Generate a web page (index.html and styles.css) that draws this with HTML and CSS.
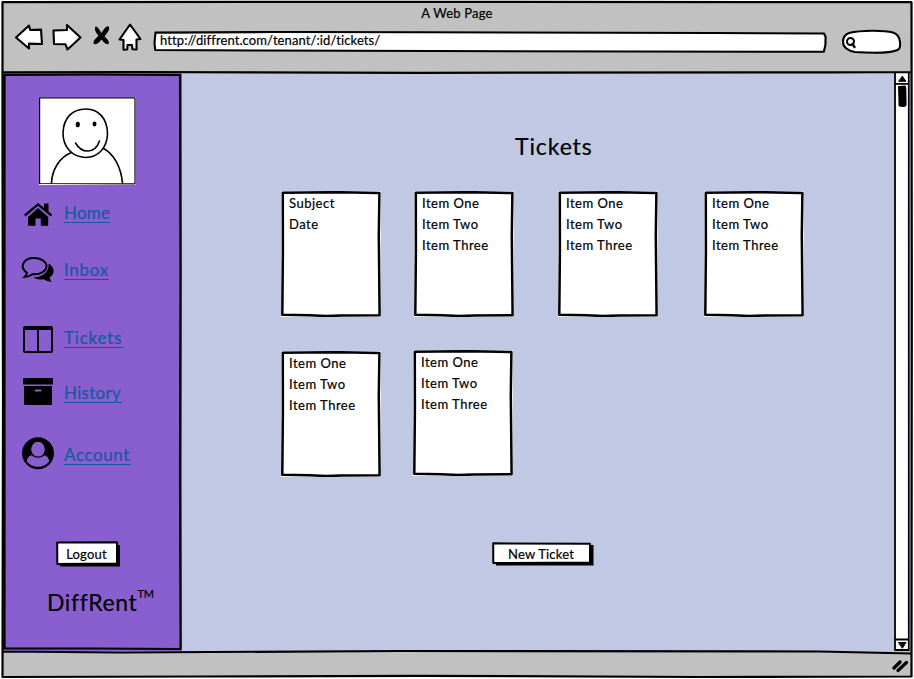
FILE: index.html
```html
<!DOCTYPE html>
<html lang="en">
<head>
<meta charset="utf-8">
<title>A Web Page</title>
<link rel="stylesheet" href="styles.css">
</head>
<body>
<svg class="defs" aria-hidden="true">
  <symbol id="card-frame" viewBox="0 0 100 126">
    <path fill="#fff" d="M0 0H100V126H0Z"/>
    <path class="ink" fill="none" stroke-width="2.5" d="M1.8 1.8L25 1.4L58 1.2L98.4 2L97.8 45L98.6 124.2L60 124.6L45 125L28 124.2L1.3 123.8L1.9 60Z"/>
  </symbol>
</svg>
<div class="window">
  <header class="toolbar">
    <div class="title">A Web Page</div>
    <div class="controls">
      <svg class="nav-arrows" viewBox="0 0 130 30">
        <g fill="#fff" stroke="#000" stroke-width="2.1" stroke-linejoin="round" stroke-linecap="round">
          <path d="M1 15.5L14 3.5L15.2 8L26 7.6L27 22L14 21.6L14 26.5L7.500 21Z"/>
          <path d="M38.500 8.500L52 8L52 3L65.500 15.500L52.500 27.500L50.500 22.300L39 22Z"/>
          <path d="M115 2.500L125.500 17L121.500 17.500L121.500 27.500L117.500 27.300L117 23L112.500 23L112.200 27.500L108.500 27.700L108.500 18L104.500 17.500Z"/>
        </g>
        <path d="M80 5.500C81 3 83 5 86.500 11C89.500 6 92.500 3 94 5C95 8 92 11 89.500 14.500C93.500 18 94.500 20 93.500 22C91 23 88.500 20 86.500 17.500C83.500 21.500 80 23.500 78.500 21.500C78 18.500 81.500 16 83.500 13.500C80.500 10 79.500 8 80 5.500Z"/>
      </svg>
      <div class="address">
        <svg class="frame" viewBox="0 0 674 22"><path class="ink white" stroke-width="2.1" d="M2.500 1.600L120 1L270 1.300L560 2L671 2.500L672.600 6L672.400 14L670.800 20.800L480 20.500L280 20L110 19.500L2.200 19L1.500 12Z"/></svg>
        <span>http://diffrent.com/tenant/:id/tickets/</span>
      </div>
      <svg class="search" viewBox="0 0 62 27">
        <path class="ink white" stroke-width="2.100" d="M8 4C20 1 43 1 52 3.500C57 5 58.500 8 59 13C59.500 17 59 20 56.500 21C48 24.500 28 24 14 23C7 22 2 18 2 13C2 8 4 5.500 8 4Z"/>
        <circle class="ink" fill="none" stroke-width="2" cx="9.500" cy="12.500" r="3.500"/><path class="ink" stroke-width="2.400" d="M11.500 15L13.500 18"/>
      </svg>
    </div>
  </header>

  <div class="body">
    <aside class="sidebar">
      <svg class="avatar" viewBox="0 0 97 88">
        <path class="white" d="M0 0H97V88H0Z"/>
        <g class="ink" fill="none">
          <path stroke-width="1.200" d="M.6 .8L96 .8V86.800L.6 86.500Z"/>
          <g stroke-width="1.600"><path d="M47 12C60 12 68.500 22 68.500 37C68 51 59 60.500 46.500 60.500C33 60 24 50 24 36C24.500 21 33 12 47 12Z"/>
          <path d="M36.500 46C43 57 56 57 60.500 44"/><path d="M32.500 55.500C21 60 13 72 12.500 86M64.500 51.500C75 57 82 70 83.500 86"/></g>
        </g>
        <ellipse cx="38.800" cy="27.500" rx="2.100" ry="2.700"/><ellipse cx="55.500" cy="27" rx="2" ry="2.400"/>
      </svg>
      <nav class="menu">
        <div class="item"><svg viewBox="0 0 36 36"><path d="M18 13L28.200 22V30.700H20.800V23.500H15.500V30.700H8V22Z"/><path d="M24 8.500H28.500V17L24 13.500Z"/><path d="M4.800 20.500L18 9.400L31.500 20.500" fill="none" stroke="#000" stroke-width="2.300"/></svg><a class="w-home">Home</a></div>
        <div class="item"><svg viewBox="0 0 36 36"><path d="M28.500 11.500C33 14 35.500 19 32 23.500L29.500 25.500C30 27.500 31 29 32 30C28 29.500 26 28.700 24 27.300C20 28 16 27 13.500 25.200C22 25.500 29.500 20 28.500 11.500Z"/><path d="M14 6C21 6 26.500 9.500 26.500 14.200C26.500 19 20 23 12.500 22.200C10 24 7.500 25 4.500 25C6 23.500 7 22.500 7 20.500C-1 15.500 3 6 14 6Z" fill="none" stroke="#000" stroke-width="2"/></svg><a class="w-inbox">Inbox</a></div>
        <div class="item"><svg viewBox="0 0 36 36"><path fill-rule="evenodd" d="M5 6H31Q33 6 33 8V31Q33 33 31 33H5Q3 33 3 31V8Q3 6 5 6ZM5 10V31H17V10ZM19 10V31H31V10Z"/></svg><a class="w-tickets">Tickets</a></div>
        <div class="item"><svg viewBox="0 0 36 36"><path d="M4 3H32Q33 3 33 4V9.500H3V4Q3 3 4 3ZM4 11H32V29Q32 30 31 30H5Q4 30 4 29Z"/><path d="M15.500 15.500H20.500" stroke="#895fd0" stroke-width="1.800" stroke-linecap="round"/></svg><a class="w-history">History</a></div>
        <div class="item"><svg viewBox="0 0 36 36"><circle cx="18" cy="16.200" r="16"/><ellipse cx="18" cy="12.200" rx="6.800" ry="7.400" fill="#895fd0"/><path fill="#895fd0" d="M11.500 18.200C14 21.500 22 21.500 24.500 18.200C27.500 19 29 21.500 29.200 24.500C24 31.500 12 31.500 6.800 24.500C7 21 8.500 19 11.500 18.200Z"/></svg><a class="w-account">Account</a></div>
      </nav>
      <button class="button logout"><svg class="frame" viewBox="0 0 64 26"><path d="M4 4H64V25.500H4Z"/><path class="ink white" stroke-width="2" d="M1.200 1.500L61 1.300V22.500L1.300 23Z"/></svg><span>Logout</span></button>
      <div class="brand"><span>DiffRent</span><sup>TM</sup></div>
      <svg class="frame" viewBox="0 0 179 578"><path class="ink" fill="none" stroke-width="2.200" d="M1.500 2L90 1.500L177 2L177.500 200L177 400L177.600 576L90 575.500L1.500 575.500V300Z"/></svg>
    </aside>

    <main class="content">
      <h1>Tickets</h1>
      <section class="tickets">
        <article class="card"><svg class="frame"><use href="#card-frame"/></svg><p>Subject</p><p>Date</p></article>
        <article class="card"><svg class="frame"><use href="#card-frame"/></svg><p>Item One</p><p>Item Two</p><p>Item Three</p></article>
        <article class="card"><svg class="frame"><use href="#card-frame"/></svg><p>Item One</p><p>Item Two</p><p>Item Three</p></article>
        <article class="card"><svg class="frame"><use href="#card-frame"/></svg><p>Item One</p><p>Item Two</p><p>Item Three</p></article>
        <article class="card"><svg class="frame"><use href="#card-frame"/></svg><p>Item One</p><p>Item Two</p><p>Item Three</p></article>
        <article class="card raised"><svg class="frame"><use href="#card-frame"/></svg><p>Item One</p><p>Item Two</p><p>Item Three</p></article>
      </section>
      <button class="button new-ticket"><svg class="frame" viewBox="0 0 102 24"><path d="M4 3H101.500V23.500H4Z"/><path class="ink white" stroke-width="2" d="M1.200 1.300L98 1.800V20.500L1.300 21Z"/></svg><span>New Ticket</span></button>
    </main>

    <svg class="scrollbar" viewBox="0 0 16 578">
      <path class="white" d="M0 0H16V578H0Z"/>
      <path class="ink" fill="none" stroke-width="1.800" d="M1 0V577M14.800 0V577M1 10.800H14.500M1 566.500H14.500M1 577H15"/>
      <path class="ink" stroke-width="1" d="M8.500 3.500L12 8.300H5ZM4.800 569.500H12L8.500 575Z"/>
      <path d="M4 14Q3.500 13 5.500 13L11 12.500Q12.500 13 12.300 16L12.600 32Q12 34.500 9 34L5.500 33.500Q4 33 4.500 29Z"/>
    </svg>
  </div>

  <footer class="statusbar">
    <svg viewBox="0 0 18 16"><path class="ink" stroke-width="3.200" d="M2 11L8 5M6 13.500L14.500 5.500"/></svg>
  </footer>

  <svg class="frame" viewBox="0 0 914 679">
    <path class="ink" fill="none" stroke-width="2.200" d="M2.500 2.200L300 1.800L911.500 2.200L911.800 300L911.500 676.500L700 677L420 675.800L200 676.500L2.500 677L3 400L2.500 150ZM3 72.300L130 72L420 72.800L830 72.300L911 72M3 651.500L120 652.500L400 651L820 651.500L911 653.500"/>
  </svg>
</div>
</body>
</html>
```

FILE: styles.css
```css
* { box-sizing: border-box; }
body { margin: 0; background: #fff; color: #000; font: 13px/21px Lato, "Liberation Sans", sans-serif; -webkit-text-stroke: 0.2px; overflow: hidden; }
h1, p { margin: 0; font-weight: 400; }
svg { display: block; }
.defs { position: absolute; width: 0; height: 0; }
.ink { stroke: #000; stroke-linejoin: round; stroke-linecap: round; }
.white { fill: #fff; }
.frame { position: absolute; inset: 0; width: 100%; height: 100%; pointer-events: none; }

.window { position: relative; width: 914px; height: 679px; padding: 1px 2px 2px; display: flex; flex-direction: column; }
.toolbar { height: 72px; background: #c1c1c1; }
.title { height: 20px; line-height: 25px; text-align: center; letter-spacing: 0.2px; }
.controls { display: flex; align-items: flex-start; }
.nav-arrows { width: 130px; height: 30px; margin: 1px 8px 0 13px; }
.address { position: relative; width: 674px; height: 22px; margin-top: 10px; padding-left: 7px; line-height: 19px; letter-spacing: 0.1px; }
.address span { position: relative; }
.search { width: 62px; height: 27px; margin: 8px 0 0 14px; }

.body { display: flex; height: 578px; background: #c1c8e4; }
.sidebar { position: relative; width: 179px; margin-left: 1px; padding: 24px 0 0 17px; background: #895fd0; }
.avatar { width: 97px; height: 88px; margin-left: 19px; }
.menu { display: grid; grid-template-rows: 57px 68px 55px 62px 36px; margin-top: 10px; }
.item { display: flex; height: 36px; }
.item svg { width: 36px; height: 36px; margin-right: 8px; }
.item a { height: 28px; padding-top: 8px; border-bottom: 1px solid #15599d; color: #15599d; font-size: 17px; line-height: 19px; white-space: nowrap; }
.w-home { width: 46px; letter-spacing: 0.2px; }
.w-inbox { width: 45px; letter-spacing: 0.7px; }
.w-tickets { width: 60px; letter-spacing: 0.8px; }
.w-history { width: 58px; letter-spacing: 0.3px; }
.w-account { width: 67px; letter-spacing: 0.6px; }

.button { position: relative; display: block; border: 0; padding: 0; background: none; color: inherit; font: inherit; }
.button span { position: relative; }
.logout { width: 64px; height: 26px; margin: 68px 0 0 36px; padding-right: 3px; line-height: 23px; letter-spacing: 0.2px; }
.brand { display: flex; margin: 19px 0 0 27px; font-size: 23px; line-height: 32px; letter-spacing: 0.6px; }
.brand sup { font-size: 11px; line-height: 15px; letter-spacing: 0; }

.content { width: 712px; padding: 59px 0 0 99px; }
h1 { margin-left: 234px; font-size: 23px; line-height: 28px; letter-spacing: 0.9px; }
.tickets { display: grid; grid-template-columns: 133px 144px 146px 100px; grid-template-rows: 126px 126px; row-gap: 34px; margin-top: 31px; }
.card { position: relative; width: 100px; height: 126px; padding: 2px 0 0 8px; letter-spacing: 0.5px; white-space: nowrap; }
.card p { position: relative; }
.raised { margin: -1px 0 0 -1px; }
.new-ticket { width: 102px; height: 24px; margin: 65px 0 0 211px; padding-right: 4px; line-height: 21px; letter-spacing: 0.2px; }
.scrollbar { width: 16px; height: 578px; }

.statusbar { display: flex; justify-content: flex-end; height: 26px; padding: 6px 2px 0 0; background: #c1c1c1; }
.statusbar svg { width: 18px; height: 16px; }
```
